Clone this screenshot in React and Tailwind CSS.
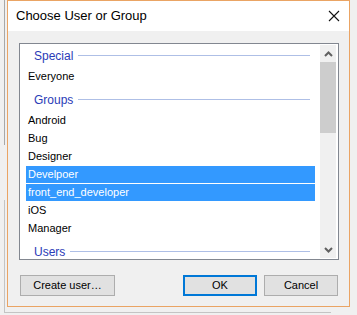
import React from 'react';

const rows = [
  { type: 'header', label: 'Special' },
  { type: 'item', label: 'Everyone' },
  { type: 'header', label: 'Groups' },
  { type: 'item', label: 'Android' },
  { type: 'item', label: 'Bug' },
  { type: 'item', label: 'Designer' },
  { type: 'item', label: 'Develpoer', selected: true },
  { type: 'item', label: 'front_end_developer', selected: true },
  { type: 'item', label: 'iOS' },
  { type: 'item', label: 'Manager' },
  { type: 'header', label: 'Users' },
];

const Chevron = ({ up }) => (
  <svg width="9" height="6" viewBox="0 0 9 6">
    <path
      d={up ? 'M1 5 L4.5 1.5 L8 5' : 'M1 1 L4.5 4.5 L8 1'}
      fill="none"
      stroke="#606060"
      strokeWidth="2"
    />
  </svg>
);

const Button = ({ children, className = '' }) => (
  <div
    className={`h-[21px] flex items-center justify-center bg-[#e1e1e1] text-[11px] text-black ${className}`}
  >
    {children}
  </div>
);

export default function App() {
  return (
    <div
      className="relative w-[357px] h-[315px] bg-[#f0f0f0] overflow-hidden"
      style={{ fontFamily: '"Liberation Sans", Arial, sans-serif' }}
    >
      {/* parent window edges behind the dialog */}
      <div className="absolute left-[4px] top-0 w-px h-[145px] bg-[#a8a8a8]" />
      <div className="absolute left-[4px] top-[200px] w-px h-[112px] bg-[#c4c4c4]" />
      <div className="absolute left-[4px] top-[312px] w-[327px] h-px bg-[#c4c4c4]" />

      {/* Dialog */}
      <div className="relative ml-[7px] w-[343px] h-[307px] border border-[#eaa464] bg-[#f0f0f0] flex flex-col">
        {/* Title bar */}
        <div className="h-[30px] bg-white flex items-center justify-between pl-[8px] pr-[8px] shrink-0">
          <span className="text-[13px] text-black">Choose User or Group</span>
          <svg width="12" height="12" viewBox="0 0 12 12" className="mr-[1px]">
            <path d="M1 1 L11 11 M11 1 L1 11" stroke="#111" strokeWidth="1.1" />
          </svg>
        </div>

        {/* Body */}
        <div className="flex-1 flex flex-col pt-[12px]">
          {/* List box */}
          <div className="ml-[11px] w-[320px] h-[217px] border border-[#828790] bg-white p-px flex">
            <div className="flex-1 overflow-hidden">
              <div className="-mt-[3px] flex flex-col">
                {rows.map((r) =>
                  r.type === 'header' ? (
                    <div key={r.label} className="h-[26px] flex items-center pl-[13px] pr-[10px] pt-px">
                      <span className="text-[12px] text-[#2a3bb7] leading-none">{r.label}</span>
                      <div className="flex-1 h-px bg-[#aebfe6] ml-[5px]" />
                    </div>
                  ) : (
                    <div key={r.label} className="h-[18px] pl-[5px] pr-[5px]">
                      <div
                        className={`h-[17px] flex items-center pl-[2px] text-[11px] ${
                          r.selected ? 'bg-[#3399ff] text-white' : 'text-black'
                        }`}
                      >
                        {r.label}
                      </div>
                    </div>
                  )
                )}
              </div>
            </div>
            {/* Scrollbar */}
            <div className="w-[16px] bg-[#f0f0f0] flex flex-col mr-px">
              <div className="h-[17px] flex items-center justify-center">
                <Chevron up />
              </div>
              <div className="h-[71px] bg-[#cdcdcd]" />
              <div className="flex-1" />
              <div className="h-[17px] flex items-center justify-center">
                <Chevron />
              </div>
            </div>
          </div>

          {/* Buttons */}
          <div className="flex mt-[15px] pl-[12px]">
            <Button className="w-[95px] border border-[#adadad]">Create user…</Button>
            <Button className="w-[74px] ml-[68px] border-2 border-[#0078d7]">OK</Button>
            <Button className="w-[74px] ml-[7px] border border-[#adadad]">Cancel</Button>
          </div>
        </div>
      </div>
    </div>
  );
}
